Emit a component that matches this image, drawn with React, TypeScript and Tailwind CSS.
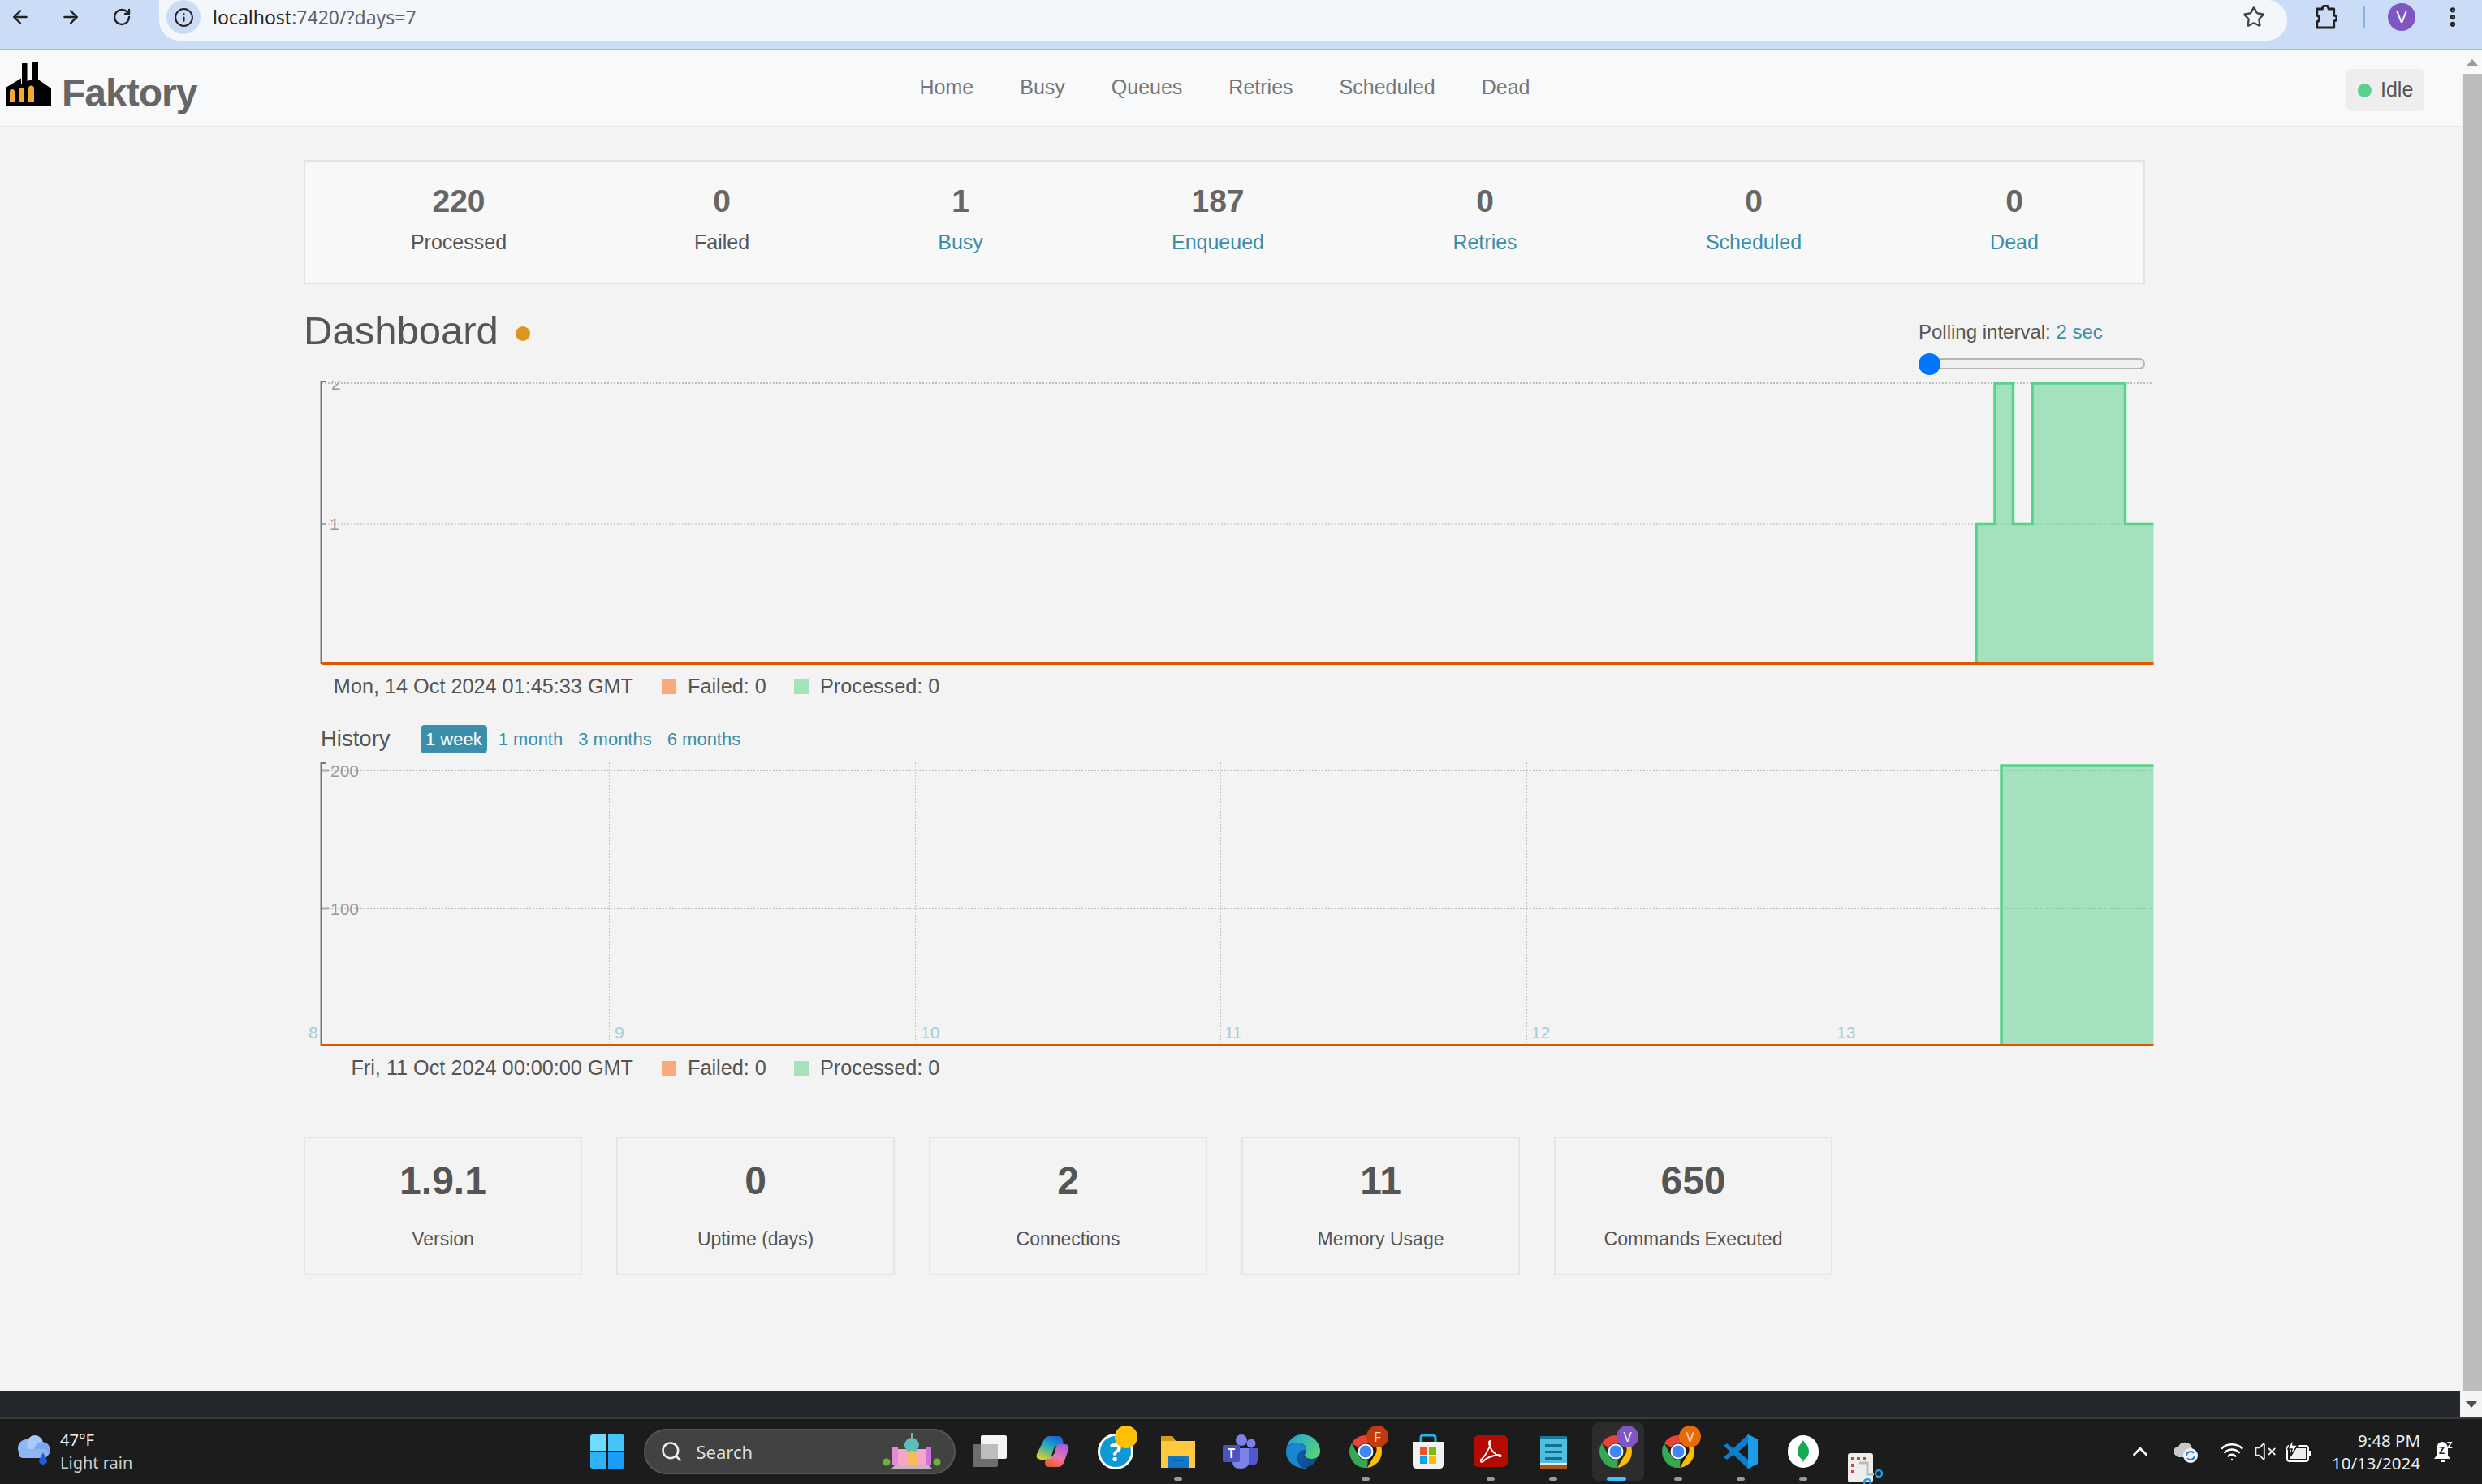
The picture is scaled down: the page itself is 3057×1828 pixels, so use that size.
import React from "react";
import { ArrowLeft, ArrowRight, RotateCw, Info, Star, EllipsisVertical, Search, ChevronUp, Wifi, VolumeX } from "lucide-react";

const font = "[font-family:'Liberation_Sans',Arial,sans-serif]";

const stats: [string, string, boolean][] = [
  ["220", "Processed", false],
  ["0", "Failed", false],
  ["1", "Busy", true],
  ["187", "Enqueued", true],
  ["0", "Retries", true],
  ["0", "Scheduled", true],
  ["0", "Dead", true],
];

const cards = [
  ["1.9.1", "Version"],
  ["0", "Uptime (days)"],
  ["2", "Connections"],
  ["11", "Memory Usage"],
  ["650", "Commands Executed"],
];

function Legend({ time }: { time: string }) {
  return (
    <div className="flex h-[32px] items-center text-[25.250px] text-[#555]">
      <div className="w-[406px] text-right">{time}</div>
      <div className="ml-[35px] h-[18px] w-[18px] bg-[#f9a97a]" />
      <div className="ml-[14px] w-[131px]">Failed: 0</div>
      <div className="h-[18px] w-[19px] bg-[#a4e3b9]" />
      <div className="ml-[13px]">Processed: 0</div>
    </div>
  );
}

function RealtimeChart() {
  const x = (v: number) => v - 374;
  const y = (v: number) => v - 465;
  const area = `M${x(2434)} ${y(817)} V${y(645.5)} H${x(2457)} V${y(472)} H${x(2479.5)} V${y(645.5)} H${x(2503)} V${y(472)} H${x(2617.500)} V${y(645.5)} H${x(2652.500)}`;
  return (
    <svg className="block h-[365px] w-[2290px]" viewBox="0 0 2290 365">
      <defs>
        <clipPath id="rt"><rect x="0" y={y(469)} width="2290" height="360" /></clipPath>
      </defs>
      <g stroke="#bdbdbd" strokeWidth="2" strokeDasharray="2 2">
        <line x1={x(396)} x2={x(2652)} y1={y(472)} y2={y(472)} />
        <line x1={x(396)} x2={x(2652)} y1={y(645.5)} y2={y(645.5)} />
      </g>
      <path d={`${area} V${y(817)} Z`} fill="#56d28a" fillOpacity="0.5" />
      <path d={area} fill="none" stroke="#56d28a" strokeWidth="3.500" />
      <line x1={x(395.5)} x2={x(395.5)} y1={y(469)} y2={y(818)} stroke="#777" strokeWidth="2" />
      <line x1={x(395)} x2={x(402)} y1={y(470)} y2={y(470)} stroke="#777" strokeWidth="2" />
      <line x1={x(396)} x2={x(402)} y1={y(645.5)} y2={y(645.5)} stroke="#aaa" strokeWidth="3" />
      <line x1={x(396)} x2={x(2652.5)} y1={y(817.5)} y2={y(817.5)} stroke="#e05500" strokeWidth="3" />
      <g clipPath="url(#rt)" fill="#999" fontSize="21">
        <text x={x(408)} y={y(480)}>2</text>
        <text x={x(406)} y={y(653)}>1</text>
      </g>
    </svg>
  );
}

function HistoryChart() {
  const x = (v: number) => v - 374;
  const y = (v: number) => v - 935;
  const vs: [number, string, number][] = [
    [374, "8", 380],
    [750, "9", 757],
    [1127, "10", 1134],
    [1503, "11", 1508],
    [1880, "12", 1886],
    [2256, "13", 2262],
  ];
  return (
    <svg className="block h-[365px] w-[2290px]" viewBox="0 0 2290 365">
      <g stroke="#bdbdbd" strokeWidth="2" strokeDasharray="2 2">
        <line x1={x(396)} x2={x(2652)} y1={y(949)} y2={y(949)} />
        <line x1={x(396)} x2={x(2652)} y1={y(1119)} y2={y(1119)} />
      </g>
      <g stroke="#c4c4c4" strokeWidth="1" strokeDasharray="2 2">
        {vs.map(([v]) => (
          <line key={v} x1={x(v) + 0.5} x2={x(v) + 0.5} y1={y(939)} y2={y(1288)} />
        ))}
      </g>
      <path d={`M${x(2465)} ${y(1287)} V${y(943)} H${x(2652.5)} V${y(1287)} Z`} fill="#56d28a" fillOpacity="0.5" />
      <path d={`M${x(2465)} ${y(1287)} V${y(943)} H${x(2652.5)}`} fill="none" stroke="#56d28a" strokeWidth="3.500" />
      <line x1={x(395.5)} x2={x(395.5)} y1={y(939)} y2={y(1288)} stroke="#777" strokeWidth="2" />
      <line x1={x(395)} x2={x(402)} y1={y(940)} y2={y(940)} stroke="#777" strokeWidth="2" />
      <line x1={x(396)} x2={x(405)} y1={y(949)} y2={y(949)} stroke="#aaa" strokeWidth="3" />
      <line x1={x(396)} x2={x(405)} y1={y(1119)} y2={y(1119)} stroke="#aaa" strokeWidth="3" />
      <line x1={x(396)} x2={x(2652.5)} y1={y(1287.5)} y2={y(1287.5)} stroke="#e05500" strokeWidth="3" />
      <g fill="#999" fontSize="21">
        <text x={x(407)} y={y(957)}>200</text>
        <text x={x(407)} y={y(1127)}>100</text>
      </g>
      <g fill="#a5cbd9" fontSize="21">
        {vs.map(([v, t, l]) => (
          <text key={v} x={x(l)} y={y(1279)}>{t}</text>
        ))}
      </g>
    </svg>
  );
}

function Factory() {
  return (
    <svg className="h-[56px] w-[56px]" viewBox="0 0 56 56">
      <path d="M0 55V32L19 20.5V28L20 27V1H26.500V24L32 22V0H40V22L56 33V55Z" fill="#000" />
      <path d="M5 50V37q0-3 3-3t3 3V50Z" fill="#f6a833" />
      <path d="M16 50V35q0-3 3.500-3t3.500 3V50Z" fill="#f6a833" />
      <path d="M28 50V33q0-3.500 3.500-3.500t3.500 3.500V50Z" fill="#f6a833" />
    </svg>
  );
}

function ChromeLogo() {
  return (
    <svg className="h-[44px] w-[44px]" viewBox="0 0 44 44">
      <path d="M22 2a20 20 0 0 1 17.300 10H22a10 10 0 0 0-8.700 5L4.700 12A20 20 0 0 1 22 2Z" fill="#ea4335" />
      <path d="M39.300 12A20 20 0 0 1 24 42l8.700-15a10 10 0 0 0-1-15Z" fill="#fbbc05" />
      <path d="M4.700 12l8.600 15a10 10 0 0 0 11.400 5L24 42A20 20 0 0 1 4.700 12Z" fill="#34a853" />
      <circle cx="22" cy="22" r="8.500" fill="#4285f4" stroke="#fff" strokeWidth="2" />
    </svg>
  );
}

function ChromeBadge({ letter, color, lighter }: { letter: string; color: string; lighter?: boolean }) {
  return (
    <div className="relative h-[44px] w-[44px]">
      <ChromeLogo />
      <div
        className={`absolute left-[23px] top-[-10px] flex h-[27px] w-[27px] items-center justify-center rounded-full text-[17px] ${lighter ? "text-[#f1e8ff]" : "text-[#ffd9c0]"}`}
        style={{ backgroundColor: color }}
      >
        {letter}
      </div>
    </div>
  );
}

const taskIcons: { key: string; dot?: boolean; active?: boolean; el: React.ReactNode }[] = [
  {
    key: "task",
    el: (
      <svg className="h-[44px] w-[44px]" viewBox="0 0 44 44">
        <rect x="0" y="13" width="31" height="28" rx="2" fill="#6d6d6d" />
        <rect x="10" y="2" width="32" height="29" rx="2" fill="#f6f6f6" />
        <path d="M10 13H31V31H12q-2 0-2-2Z" fill="#bdbdbd" />
      </svg>
    ),
  },
  {
    key: "copilot",
    el: (
      <svg className="h-[44px] w-[44px]" viewBox="0 0 44 44">
        <defs>
          <linearGradient id="cpa" x1="0.700" y1="0" x2="0.200" y2="1"><stop offset="0" stopColor="#1c62d8" /><stop offset="0.400" stopColor="#1ba7c8" /><stop offset="1" stopColor="#e8d21a" /></linearGradient>
          <linearGradient id="cpb" x1="0.700" y1="0" x2="0.300" y2="1"><stop offset="0" stopColor="#a45ce0" /><stop offset="0.550" stopColor="#e878b0" /><stop offset="1" stopColor="#f0582a" /></linearGradient>
        </defs>
        <path d="M17 3H29C32 3 33 5 34 8L35 15H28C24 15 23 18 22 21L19 31C18 34 16 32 14 32H7C3 32 1 30 2 25L10 9C12 5 14 3 17 3Z" fill="url(#cpa)" />
        <path d="M30 13H37C41 13 42 16 41 20L35 36C33 40 31 41 28 41H16C13 41 12 38 12 35L14 31H18L24 24C25 19 26 13 30 13Z" fill="url(#cpb)" />
      </svg>
    ),
  },
  {
    key: "help",
    el: (
      <div className="relative h-[44px] w-[44px]">
        <div className="flex h-[44px] w-[44px] items-center justify-center rounded-full border-[3px] border-white bg-[#0e99d4] text-[30px] font-bold text-white">?</div>
        <div className="absolute left-[21px] top-[-10px] h-[28px] w-[28px] rounded-full bg-[#ffc107]" />
      </div>
    ),
  },
  {
    key: "folder",
    dot: true,
    el: (
      <svg className="h-[44px] w-[44px]" viewBox="0 0 44 44">
        <path d="M1 3h14l4 6h24v33H1Z" fill="#ffc83d" />
        <path d="M1 3h14l4 6H1Z" fill="#d99a1a" />
        <path d="M9 42V30q0-3 3-3h20q3 0 3 3v12Z" fill="#0f78c8" />
        <rect x="16" y="32" width="12" height="2" fill="#0a5c9e" />
      </svg>
    ),
  },
  {
    key: "teams",
    el: (
      <svg className="h-[44px] w-[44px]" viewBox="0 0 44 44">
        <circle cx="35" cy="12" r="5.500" fill="#7b83eb" />
        <circle cx="23" cy="8" r="7" fill="#7b83eb" />
        <path d="M29 18h14v14q0 7-7 7h-7Z" fill="#5059c9" />
        <path d="M12 18h20v17q0 8-10 8t-10-8Z" fill="#7b83eb" />
        <rect x="0" y="14" width="21" height="21" rx="2" fill="#4b53bc" />
        <text x="10.500" y="30" fontSize="16" fontWeight="700" textAnchor="middle" fill="#fff">T</text>
      </svg>
    ),
  },
  {
    key: "edge",
    el: (
      <svg className="h-[44px] w-[44px]" viewBox="0 0 44 44">
        <defs>
          <linearGradient id="eda" x1="0" y1="0" x2="1" y2="0.6"><stop offset="0" stopColor="#1b9de2" /><stop offset="1" stopColor="#52d17c" /></linearGradient>
          <linearGradient id="edb" x1="0" y1="0" x2="1" y2="1"><stop offset="0" stopColor="#0c59a4" /><stop offset="1" stopColor="#114a8b" /></linearGradient>
        </defs>
        <path d="M21 1C33 1 43 10 43 22c0 6-5 9-10 9-6 0-9-2-9-5 0-2 2-3 2-6 0-5-5-9-11-9C9 11 3 13 1 20 3 8 11 1 21 1Z" fill="url(#eda)" />
        <path d="M1 20c2-6 8-9 13-9 6 0 12 4 12 9-6 0-11 4-11 10 0 6 5 11 13 13 3 1 7 0 10-1-4 2-7 1-10 1C13 43 0 36 1 20Z" fill="#1a86d0" />
        <path d="M15 30c0-6 5-10 11-10 0 3-2 4-2 6 0 3 3 5 9 5 3 0 5-1 7-2-3 8-10 13-18 13-5-2-7-7-7-12Z" fill="url(#edb)" />
      </svg>
    ),
  },
  { key: "chromeF", dot: true, el: <ChromeBadge letter="F" color="#c13b0e" /> },
  {
    key: "store",
    el: (
      <svg className="h-[44px] w-[44px]" viewBox="0 0 44 44">
        <path d="M13 11V5q0-3 3-3h12q3 0 3 3v6" fill="none" stroke="#26b4f0" strokeWidth="3" />
        <path d="M3 10h38v28q0 5-5 5H8q-5 0-5-5Z" fill="#f1f1f1" />
        <rect x="12" y="17" width="9" height="9" fill="#f25022" />
        <rect x="23" y="17" width="9" height="9" fill="#7fba00" />
        <rect x="12" y="28" width="9" height="9" fill="#00a4ef" />
        <rect x="23" y="28" width="9" height="9" fill="#ffb900" />
      </svg>
    ),
  },
  {
    key: "pdf",
    dot: true,
    el: (
      <svg className="h-[44px] w-[44px]" viewBox="0 0 44 44">
        <rect x="1" y="2" width="42" height="39" rx="6" fill="#b30b00" />
        <path d="M10 32c3-2 9-10 12-20 1-4-2-4-2-1 0 7 7 15 13 17 3 1 2-3-2-2-6 1-13 3-17 7-2 3-5 2-4 0Z" fill="none" stroke="#fff" strokeWidth="1.800" />
      </svg>
    ),
  },
  {
    key: "notepad",
    dot: true,
    el: (
      <svg className="h-[44px] w-[44px]" viewBox="0 0 44 44">
        <rect x="6" y="3" width="33" height="36" fill="#4fbfe0" />
        <rect x="6" y="3" width="33" height="4" fill="#157a9c" />
        <rect x="12" y="13" width="21" height="3" fill="#176f8f" />
        <rect x="12" y="21" width="21" height="3" fill="#176f8f" />
        <rect x="12" y="29" width="21" height="3" fill="#176f8f" />
        <rect x="6" y="36" width="33" height="3" fill="#e8e8e8" />
        <rect x="6" y="39" width="33" height="4" fill="#a6561a" />
      </svg>
    ),
  },
  { key: "chromeV", active: true, el: <ChromeBadge letter="V" color="#7e57c2" lighter /> },
  { key: "chromeV2", dot: true, el: <ChromeBadge letter="V" color="#e86a00" /> },
  {
    key: "vscode",
    dot: true,
    el: (
      <svg className="h-[44px] w-[44px]" viewBox="0 0 44 44">
        <path d="M31 1l12 6v30l-12 6L13 26 5 32l-4-3 8-7-8-7 4-3 8 6Z" fill="#0a7fcb" />
        <path d="M31 1l12 6v30l-12 6Z" fill="#1f9ce8" />
        <path d="M31 12v20l-12-10Z" fill="#1c1c1c" />
      </svg>
    ),
  },
  {
    key: "mongo",
    dot: true,
    el: (
      <div className="flex h-[40px] w-[38px] items-center justify-center rounded-full bg-white">
        <svg className="h-[28px] w-[14px]" viewBox="0 0 14 28">
          <path d="M7 0c2 4 7 7 7 14 0 5-3 8-6 10l-1 4-1-4c-3-2-6-5-6-10C0 7 5 4 7 0Z" fill="#13aa52" />
        </svg>
      </div>
    ),
  },
];

export default function App() {
  return (
    <div className={`flex h-[1828px] w-[3057px] flex-col overflow-hidden ${font}`}>
      {/* Browser toolbar */}
      <div className="flex h-[62px] items-start border-b-2 border-[#a9b9d2] bg-[#cbdcf6] text-[#222]">
        <div className="flex h-[42px] items-center">
          <ArrowLeft className="ml-[12px] h-[26px] w-[26px]" strokeWidth={2.2} />
          <ArrowRight className="ml-[36px] h-[26px] w-[26px]" strokeWidth={2.2} />
          <RotateCw className="ml-[38px] h-[24px] w-[24px]" strokeWidth={2.4} />
        </div>
        <div className="ml-[34px] flex h-[50px] w-[2621px] items-start rounded-r-[25px] rounded-bl-[25px] bg-[#f3f7fc]">
          <div className="flex h-[42px] w-full items-center">
            <div className="ml-[9px] flex h-[42px] w-[42px] shrink-0 items-center justify-center rounded-full bg-[#cbdcf6]">
              <Info className="h-[25px] w-[25px]" strokeWidth={2} />
            </div>
            <div className="ml-[15px] text-[23px] text-[#222] [font-family:'Noto_Sans',sans-serif]">
              localhost<span className="text-[#5f6368]">:7420/?days=7</span>
            </div>
            <Star className="ml-auto mr-[27px] h-[28px] w-[28px] text-[#444]" strokeWidth={2} />
          </div>
        </div>
        <div className="flex h-[42px] items-center">
          <svg className="ml-[32px] h-[30px] w-[30px]" viewBox="0 0 30 30">
            <path d="M4 5h7q0-4 4-4t4 4h7v8q3.500 0 3.500 3.500T26 20v8H4v-7q3-1 3-4t-3-4Z" fill="none" stroke="#222" strokeWidth="3" strokeLinejoin="round" transform="translate(1 0) scale(0.95 1)" />
          </svg>
          <div className="ml-[31px] h-[28px] w-[3px] rounded bg-[#8fb2e6]" />
          <div className="ml-[28px] flex h-[34px] w-[34px] items-center justify-center rounded-full bg-[#7e57c2] text-[20px] text-white">V</div>
          <EllipsisVertical className="ml-[31px] h-[30px] w-[30px]" strokeWidth={3} />
        </div>
      </div>

      <div className="flex min-h-0 flex-1">
        {/* Page */}
        <div className="w-[3032px] bg-[#f3f3f3]">
          <div className="relative flex h-[95px] items-center justify-center border-b-2 border-[#e8e8e8] bg-[#f8f9fb]">
            <div className="absolute left-[7px] top-[14px] flex items-start">
              <Factory />
              <span className="ml-[13px] mt-[14px] text-[48px] font-bold leading-[50px] tracking-[-1px] text-[#666]">Faktory</span>
            </div>
            <nav className="ml-[-15px] mt-[-2px] flex gap-[57px] text-[25px] text-[#777]">
              {["Home", "Busy", "Queues", "Retries", "Scheduled", "Dead"].map((n) => (
                <span key={n}>{n}</span>
              ))}
            </nav>
            <div className="absolute left-[2890px] top-[23px] flex h-[52px] w-[96px] items-center rounded-[6px] bg-[#eee]">
              <span className="ml-[14px] h-[17px] w-[17px] rounded-full bg-[#56d28a]" />
              <span className="ml-[11px] text-[25px] text-[#555]">Idle</span>
            </div>
          </div>

          <div className="ml-[374px] w-[2268px]">
            <div className="mt-[40px] grid h-[153px] grid-cols-[378px_270px_318px_316px_342px_320px_322px] border-2 border-[#e3e3e3] bg-[#f8f8f8] text-center">
              {stats.map(([v, l, link]) => (
                <div key={l} className="pt-[24px]">
                  <div className="text-[39px] font-bold leading-[50px] text-[#666]">{v}</div>
                  <div className={`mt-[9px] text-[25px] leading-[32px] ${link ? "text-[#3b8ea8]" : "text-[#555]"}`}>{l}</div>
                </div>
              ))}
            </div>

            <div className="flex h-[115px] items-start justify-between">
              <div className="mt-[31px] flex items-center">
                <h1 className="text-[49px] leading-[52px] text-[#555]">Dashboard</h1>
                <span className="ml-[21px] mt-[8px] h-[18px] w-[18px] rounded-full bg-[#dc9520]" />
              </div>
              <div className="mt-[43px] w-[279px]">
                <div className="text-[24px] leading-[32px] text-[#555]">
                  Polling interval: <span className="text-[#3b8ea8]">2 sec</span>
                </div>
                <div className="relative mt-[16px] h-[14px] rounded-full border-2 border-[#b5b5b5] bg-[#efefef]">
                  <div className="absolute left-[-2px] top-[-8.500px] h-[27px] w-[27px] rounded-full bg-[#0075ff]" />
                </div>
              </div>
            </div>

            <RealtimeChart />
            <Legend time="Mon, 14 Oct 2024 01:45:33 GMT" />

            <div className="mt-[31px] flex h-[35px] items-center text-[22px] text-[#3b8ea8]">
              <span className="ml-[21px] mt-[-3px] w-[123px] text-[27.500px] leading-[33px] text-[#555]">History</span>
              <span className="rounded-[5px] bg-[#3a90aa] px-[6px] leading-[35px] text-white">1 week</span>
              <span className="ml-[14px]">1 month</span>
              <span className="ml-[19px]">3 months</span>
              <span className="ml-[19px]">6 months</span>
            </div>
            <div className="mt-[7px]">
              <HistoryChart />
            </div>
            <Legend time="Fri, 11 Oct 2024 00:00:00 GMT" />

            <div className="mt-[68px] flex gap-[42px]">
              {cards.map(([v, l]) => (
                <div key={l} className="h-[171px] w-[343px] border-2 border-[#e2e6ec] text-center">
                  <div className="mt-[26px] text-[48px] font-bold leading-[54px] text-[#555]">{v}</div>
                  <div className="mt-[30px] text-[23px] leading-[28px] text-[#555]">{l}</div>
                </div>
              ))}
            </div>
          </div>
        </div>

        {/* Scrollbar */}
        <div className="flex w-[25px] flex-col bg-[#f1f1f1]">
          <div className="flex h-[29px] items-center justify-center bg-[#f8f9fb]">
            <div className="h-0 w-0 border-x-[7px] border-b-[8px] border-x-transparent border-b-[#9a9a9a]" />
          </div>
          <div className="ml-[1px] flex-1 bg-[#bcbcbc]" />
        </div>
      </div>

      {/* Dark strip */}
      <div className="flex h-[33px] bg-[#23272c]">
        <div className="ml-auto flex w-[27px] items-center justify-center bg-[#f4f4f4]">
          <div className="h-0 w-0 border-x-[7px] border-t-[8px] border-x-transparent border-t-[#505050]" />
        </div>
      </div>

      {/* Taskbar */}
      <div className="relative flex h-[82px] items-center border-t-2 border-[#3a3a3a] bg-[#1c1c1c] [font-family:'Noto_Sans',sans-serif]">
        <svg className="ml-[19px] h-[42px] w-[46px]" viewBox="0 0 46 42">
          <circle cx="14" cy="17" r="11" fill="#8fb8f5" />
          <circle cx="24" cy="11" r="10" fill="#a9c9fb" />
          <circle cx="33" cy="19" r="10" fill="#7ba7ee" />
          <rect x="4" y="18" width="36" height="11" rx="5" fill="#8fb5f2" />
          <path d="M34 22l5 10a5 5 0 1 1-10 0Z" fill="#1f5fdc" />
        </svg>
        <div className="ml-[9px] w-[100px] whitespace-nowrap text-[#eee]">
          <div className="text-[20px] leading-[28px]">47°F</div>
          <div className="text-[20px] leading-[28px] text-[#ccc]">Light rain</div>
        </div>
        <div className="ml-[535.500px] flex h-[78px] w-[77px] items-center justify-center">
          <div className="grid h-[42px] w-[42px] grid-cols-2 gap-[2px]">
            <div className="rounded-tl-[3px] bg-[#6fdcff]" />
            <div className="rounded-tr-[3px] bg-[#43c4fb]" />
            <div className="rounded-bl-[3px] bg-[#2fb2fb]" />
            <div className="rounded-br-[3px] bg-[#1a9cfa]" />
          </div>
        </div>
        <div className="ml-[6px] flex h-[56px] w-[384px] items-center rounded-full border-2 border-[#555] bg-[#424242]">
          <Search className="ml-[18px] h-[28px] w-[28px] text-[#eee]" strokeWidth={2.2} />
          <span className="ml-[17px] text-[22px] text-[#ddd]">Search</span>
          <svg className="ml-auto mr-[16px] h-[46px] w-[72px]" viewBox="0 0 72 46">
            <circle cx="5" cy="36" r="4.500" fill="#6fb33d" />
            <circle cx="67" cy="36" r="4.500" fill="#6fb33d" />
            <rect x="14" y="20" width="44" height="20" fill="#f0a7c8" />
            <rect x="12" y="18" width="7" height="22" fill="#e888d8" />
            <rect x="53" y="18" width="7" height="22" fill="#d070e0" />
            <circle cx="36" cy="15" r="9" fill="#5cc0b8" />
            <rect x="35" y="0" width="2" height="8" fill="#5cc0b8" />
            <path d="M30 40V28q0-6 6-6t6 6v12Z" fill="#f6bb5a" />
            <path d="M10 45l6-6h40l6 6Z" fill="#c8b4c0" />
          </svg>
        </div>
        <div className="ml-[5px] flex">
          {taskIcons.map((t) => (
            <div key={t.key} className="relative flex h-[78px] w-[77px] items-center justify-center">
              {t.active && <div className="absolute left-[9px] top-[3px] h-[72px] w-[64px] rounded-[8px] bg-[#2c2c2c]" />}
              <div className="relative">{t.el}</div>
              {t.dot && <div className="absolute bottom-[3px] left-[33px] h-[5px] w-[10px] rounded-full bg-[#9a9a9a]" />}
              {t.active && <div className="absolute bottom-[3px] left-[27px] h-[5px] w-[24px] rounded-full bg-[#47bfff]" />}
            </div>
          ))}
        </div>
        <svg className="ml-[16px] mt-[40px] h-[40px] w-[44px]" viewBox="0 0 44 40">
          <rect x="0" y="2" width="31" height="36" rx="3" fill="#eee" />
          <rect x="4" y="7" width="4" height="4" fill="#d8432b" />
          <rect x="11" y="7" width="4" height="4" fill="#d8432b" />
          <rect x="18" y="7" width="4" height="4" fill="#d8432b" />
          <rect x="4" y="15" width="4" height="4" fill="#d8432b" />
          <rect x="4" y="23" width="4" height="4" fill="#d8432b" />
          <path d="M14 14h10v14h8" fill="none" stroke="#bbb" strokeWidth="3" />
          <circle cx="38" cy="27" r="4" fill="none" stroke="#1e9be0" strokeWidth="2.500" />
          <circle cx="24" cy="38" r="4" fill="none" stroke="#1e9be0" strokeWidth="2.500" />
        </svg>
        <ChevronUp className="ml-[301px] h-[30px] w-[30px] text-white" strokeWidth={2.2} />
        <svg className="ml-[27px] h-[30px] w-[30px]" viewBox="0 0 30 30">
          <path d="M2 20a6 6 0 0 1 3-11 9 9 0 0 1 17 2v11H7a5 5 0 0 1-5-2Z" fill="#c8c8c8" />
          <circle cx="20" cy="20" r="9" fill="#f4f4f4" />
          <path d="M15 20a5 5 0 0 1 9-3M25 20a5 5 0 0 1-9 3" fill="none" stroke="#2680d8" strokeWidth="2" />
        </svg>
        <Wifi className="ml-[26px] h-[30px] w-[30px] text-white" strokeWidth={2} />
        <VolumeX className="ml-[12px] h-[28px] w-[28px] text-[#eee]" strokeWidth={1.6} />
        <svg className="ml-[11px] h-[32px] w-[32px]" viewBox="0 0 32 32">
          <rect x="2" y="9" width="26" height="19" rx="3" fill="none" stroke="#fff" strokeWidth="2" />
          <rect x="5" y="12" width="20" height="13" fill="#eee" />
          <rect x="29" y="15" width="2.500" height="7" fill="#fff" />
          <path d="M9 0L3 13h5l-2 9 9-14H9Z" fill="#fff" stroke="#1c1c1c" strokeWidth="1.500" />
        </svg>
        <div className="ml-auto mr-[76px] text-right text-[20.500px] leading-[28px] text-[#eee]">
          <div>9:48 PM</div>
          <div>10/13/2024</div>
        </div>
        <svg className="absolute left-[2998px] top-[24px] h-[32px] w-[26px]" viewBox="0 0 26 32">
          <path d="M10 4q-7 1-7 9v8l-3 4h20l-3-4v-8q0-8-7-9Z" fill="#fff" />
          <rect x="8" y="26" width="6" height="3" rx="1.500" fill="#fff" />
          <text x="6" y="19" fontSize="12" fontWeight="700" fill="#1c1c1c">Z</text>
          <text x="16" y="12" fontSize="11" fontWeight="700" fill="#fff">Z</text>
        </svg>
      </div>
    </div>
  );
}
